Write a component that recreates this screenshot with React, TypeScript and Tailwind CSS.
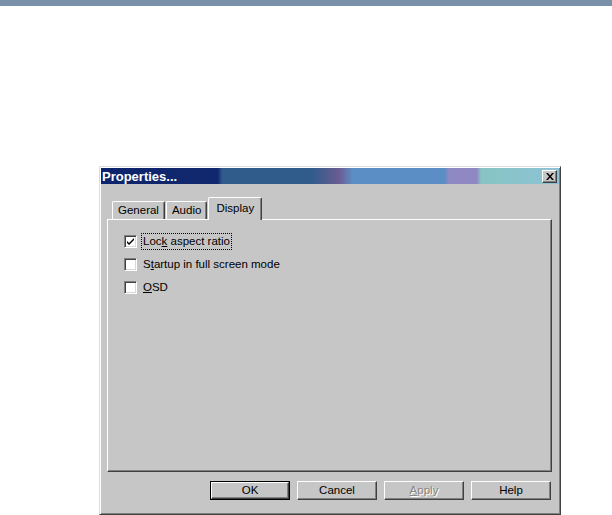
import React from "react";

const raised =
  "border border-t-white border-l-white border-r-[#404040] border-b-[#404040] shadow-[inset_-1px_-1px_#808080]";

const Checkbox = ({ checked }: { checked?: boolean }) => (
  <div className="w-[13px] h-[13px] bg-white border border-t-[#808080] border-l-[#808080] border-r-white border-b-white shadow-[inset_1px_1px_#404040,inset_-1px_-1px_#d8d8d8] flex items-center justify-center">
    {checked && (
      <svg width="9" height="9" viewBox="0 0 9 9">
        <path d="M1 4 L3 6 L8 1 L8 3 L3 8 L1 6 Z" fill="#000" />
      </svg>
    )}
  </div>
);

const Button = ({
  children,
  isDefault,
  disabled,
}: {
  children: React.ReactNode;
  isDefault?: boolean;
  disabled?: boolean;
}) => (
  <div
    className={`w-[80px] h-[19px] ${isDefault ? "border border-black" : ""} flex`}
  >
    <div
      className={`flex-1 flex items-center justify-center bg-[#c6c6c6] ${raised} ${
        disabled ? "text-[#868686] [text-shadow:1px_1px_#fff]" : ""
      }`}
    >
      {children}
    </div>
  </div>
);

export default function App() {
  return (
    <div className="min-h-[515px] bg-white font-['Liberation_Sans',Arial,sans-serif] text-[11.5px] text-black overflow-hidden">
      <div className="h-[6px] bg-[#7890a8]" />
      <div className="ml-[99px] mt-[160px] w-[462px] h-[349px] bg-[#c6c6c6] p-px border border-t-[#dcdcdc] border-l-[#dcdcdc] border-r-[#404040] border-b-[#404040] shadow-[inset_1px_1px_#fff,inset_-1px_-1px_#808080]">
        {/* TITLE BAR */}
        <div className="h-[16px] flex items-center justify-between bg-[linear-gradient(90deg,#0c246c_0%,#12286e_25.5%,#305c8c_26.5%,#305c8c_46%,#6a5c92_52%,#5c8ec6_55%,#5c8ec6_75%,#9088c2_76%,#9088c2_82%,#88c4c2_83%,#8cc2d6_100%)]">
          <span className="pl-[1px] text-white font-bold text-[13px] leading-none">
            Properties...
          </span>
          <div className={`mr-[2px] w-[15px] h-[13px] bg-[#c6c6c6] flex items-center justify-center ${raised}`}>
            <svg width="8" height="7" viewBox="0 0 8 7">
              <path d="M0 0 L2 0 L4 2.4 L6 0 L8 0 L5 3.5 L8 7 L6 7 L4 4.6 L2 7 L0 7 L3 3.5 Z" fill="#000" />
            </svg>
          </div>
        </div>

        {/* TABS */}
        <div className="mt-[13px] ml-[6px] w-[445px]">
          <div className="flex items-end h-[22px] pl-[5px]">
            <div className="h-[18px] px-[5px] flex items-center border border-b-0 border-t-white border-l-white border-r-[#404040] rounded-t-[2px] shadow-[inset_-1px_0_#808080]">
              General
            </div>
            <div className="h-[18px] px-[5px] ml-px flex items-center border border-b-0 border-t-white border-l-white border-r-[#404040] rounded-t-[2px] shadow-[inset_-1px_0_#808080]">
              Audio
            </div>
            <div className="relative z-10 -mb-px h-[23px] w-[54px] ml-px flex items-start pt-[2px] justify-center bg-[#c6c6c6] border border-b-0 border-t-white border-l-white border-r-[#404040] rounded-t-[2px] shadow-[inset_-1px_0_#808080]">
              Display
            </div>
          </div>
          <div className="h-[253px] border border-t-white border-l-white border-r-[#404040] border-b-[#404040] shadow-[inset_-1px_-1px_#808080] pt-[15px] pl-[16px] flex flex-col gap-[10px]">
            <div className="flex items-center h-[13px]">
              <Checkbox checked />
              <span className="ml-[5px] px-px leading-[15px] outline outline-1 outline-dotted outline-black">
                Loc<span className="underline">k</span> aspect ratio
              </span>
            </div>
            <div className="flex items-center h-[13px]">
              <Checkbox />
              <span className="ml-[6px]">
                S<span className="underline">t</span>artup in full screen mode
              </span>
            </div>
            <div className="flex items-center h-[13px]">
              <Checkbox />
              <span className="ml-[6px]">
                <span className="underline">O</span>SD
              </span>
            </div>
          </div>
        </div>

        {/* BUTTONS */}
        <div className="mt-[9px] ml-[109px] flex gap-[7px]">
          <Button isDefault>OK</Button>
          <Button>Cancel</Button>
          <Button disabled>
            <span className="underline">A</span>pply
          </Button>
          <Button>Help</Button>
        </div>
      </div>
    </div>
  );
}
